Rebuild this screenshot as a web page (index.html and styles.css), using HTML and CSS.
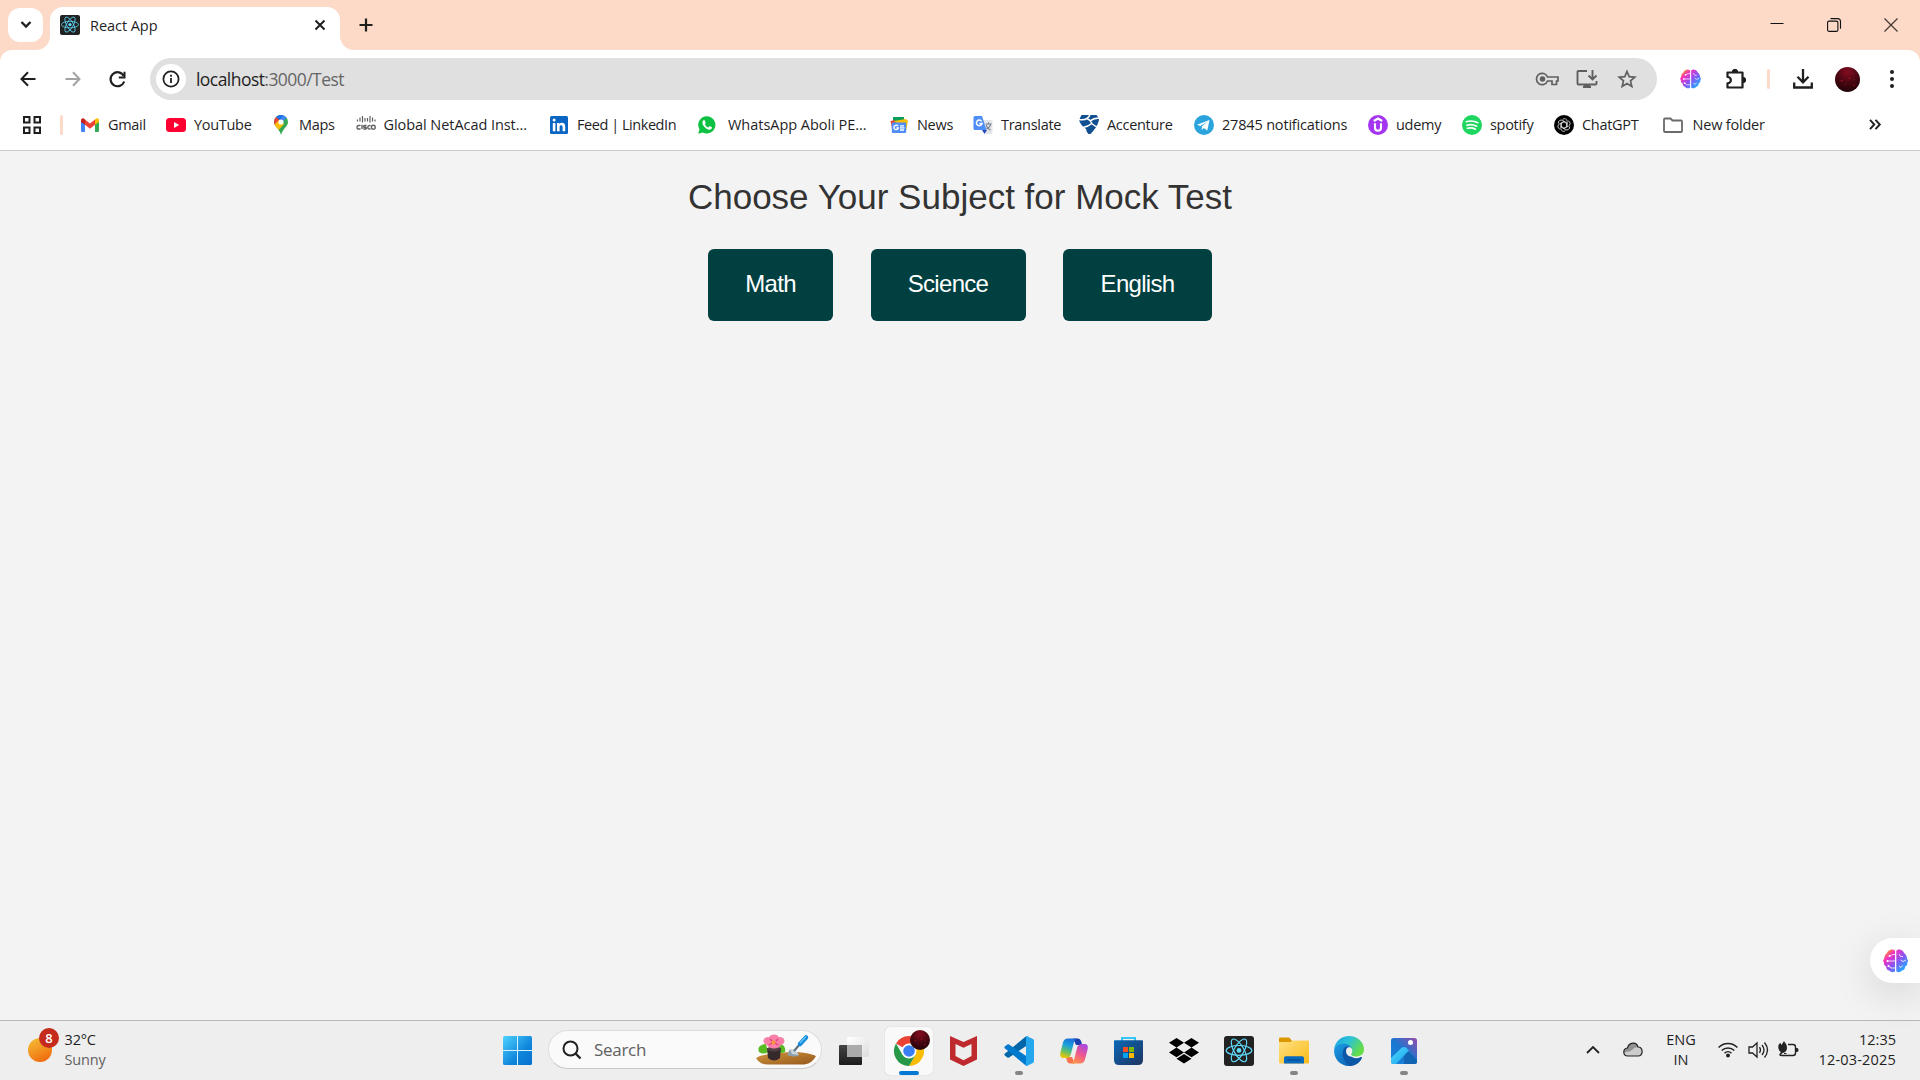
FILE: index.html
```html
<!DOCTYPE html>
<html lang="en">
<head>
<meta charset="utf-8">
<title>React App</title>
<link rel="stylesheet" href="styles.css">
</head>
<body>
<svg class="defs" aria-hidden="true">
  <defs>
    <linearGradient id="brainFill" x1="0" y1="0" x2="1" y2="1"><stop offset="0.05" stop-color="#ffb000"/><stop offset=".28" stop-color="#f52fc0"/><stop offset=".55" stop-color="#8a55f5"/><stop offset=".9" stop-color="#16b4ff"/></linearGradient>
    <radialGradient id="avatarFill" cx=".5" cy=".2" r=".8"><stop offset="0" stop-color="#850b20"/><stop offset=".5" stop-color="#4c0712"/><stop offset="1" stop-color="#210308"/></radialGradient>
    <linearGradient id="winFill" x1="0" y1="0" x2="1" y2="1"><stop offset="0" stop-color="#4fd3ff"/><stop offset=".6" stop-color="#0f86dc"/><stop offset="1" stop-color="#0670cf"/></linearGradient>
    <linearGradient id="sun" x1=".2" y1="0" x2=".7" y2="1"><stop offset="0" stop-color="#f4bd36"/><stop offset="1" stop-color="#f0680c"/></linearGradient>
    <linearGradient id="wood" x1="0" y1="0" x2="1" y2="1"><stop offset="0" stop-color="#d2953f"/><stop offset="1" stop-color="#94581a"/></linearGradient>
    <linearGradient id="copA" x1=".6" y1="0" x2=".3" y2="1"><stop offset="0" stop-color="#1b6fd8"/><stop offset=".35" stop-color="#18a0dc"/><stop offset=".65" stop-color="#5cbf70"/><stop offset="1" stop-color="#f0c800"/></linearGradient>
    <linearGradient id="copB" x1=".7" y1="0" x2=".2" y2="1"><stop offset="0" stop-color="#a948e0"/><stop offset=".5" stop-color="#f0588c"/><stop offset="1" stop-color="#ff9a45"/></linearGradient>
    <linearGradient id="store" x1="0" y1="0" x2="1" y2="1"><stop offset="0" stop-color="#0a68b8"/><stop offset="1" stop-color="#1e3560"/></linearGradient>
    <linearGradient id="folderFill" x1="0" y1="0" x2="1" y2="1"><stop offset="0" stop-color="#ffe083"/><stop offset="1" stop-color="#fbbb18"/></linearGradient>
    <linearGradient id="edgeTop" x1="0" y1="0" x2="1" y2=".5"><stop offset="0" stop-color="#1a9fe8"/><stop offset=".5" stop-color="#2cc3d3"/><stop offset="1" stop-color="#66dd45"/></linearGradient>
    <linearGradient id="edgeLow" x1="0" y1="0" x2="1" y2="1"><stop offset="0" stop-color="#1ba0e6"/><stop offset="1" stop-color="#0a50a8"/></linearGradient>
    <linearGradient id="photoBg" x1="0" y1="1" x2="1" y2="0"><stop offset="0" stop-color="#1687dc"/><stop offset=".5" stop-color="#1b76d0"/><stop offset="1" stop-color="#9a4cab"/></linearGradient>
    <linearGradient id="photoHill" x1="0" y1="0" x2="1" y2="1"><stop offset="0" stop-color="#54dcff"/><stop offset="1" stop-color="#149ee8"/></linearGradient>
    <linearGradient id="viewDark" x1="0" y1="0" x2="0" y2="1"><stop offset="0" stop-color="#444"/><stop offset="1" stop-color="#1c1c1c"/></linearGradient>
    <linearGradient id="viewLight" x1="0" y1="0" x2="1" y2="1"><stop offset="0" stop-color="#fff"/><stop offset="1" stop-color="#ddd"/></linearGradient>
    <symbol id="react" viewBox="0 0 30 30">
      <rect width="30" height="30" rx="3" fill="#222"/>
      <g fill="none" stroke="#61dafb" stroke-width="1.150"><ellipse cx="15" cy="14.400" rx="12.800" ry="4.900"/><ellipse cx="15" cy="14.400" rx="12.800" ry="4.900" transform="rotate(60 15 14.400)"/><ellipse cx="15" cy="14.400" rx="12.800" ry="4.900" transform="rotate(120 15 14.400)"/></g>
      <circle cx="15" cy="14.400" r="2.400" fill="#61dafb"/>
    </symbol>
    <symbol id="brain" viewBox="0 0 25 24">
      <path fill="url(#brainFill)" d="M12 1.800v20.400c-1.200 1.600-4.400 1.300-5.600-.7-2-.2-3.400-1.800-3.200-3.900C1.400 16.600.6 15 1 13.300-.2 12.300-.2 10.900 1.100 10 1.300 7.500 2 5.500 3.800 4.200 5.400.3 10-.6 12 1.800zM13.300 1.800v20.400c1.200 1.600 4.400 1.300 5.600-.7 2-.2 3.400-1.800 3.200-3.900 1.800-1 2.600-2.600 2.200-4.300 1-1 .9-2.400-.2-3.300-.2-2.500-1-4.500-2.800-5.800C19.700.3 15.300-.6 13.300 1.800z"/>
      <path fill="none" stroke="#fff" stroke-opacity=".8" stroke-width="1" d="M12 5.500H9.500L7 7M4 12h8M5.500 17l2.500 2h4M16 5l1.500 2.500H20M17.500 11l2.500 1.500L23 11M16 17l2 1.500 1.500-2"/>
      <circle cx="6.500" cy="7" r="1" fill="#fff"/><circle cx="4.500" cy="12" r="1" fill="#fff"/><circle cx="5.500" cy="17" r="1" fill="#fff"/>
    </symbol>
    <symbol id="avatar" viewBox="0 0 26 26">
      <circle cx="13" cy="13" r="13" fill="url(#avatarFill)"/>
      <g fill="#e01d3c" opacity=".75"><circle cx="7" cy="14" r=".8"/><circle cx="15" cy="12" r=".7"/><circle cx="20" cy="19" r=".8"/><circle cx="11" cy="18" r=".5"/><circle cx="18" cy="7" r=".5"/><circle cx="9" cy="8" r=".5"/><circle cx="20" cy="13" r=".5"/></g>
    </symbol>
  </defs>
</svg>

<div class="screen">
  <header class="tabstrip">
    <button class="tab-search" aria-label="Search tabs"><svg width="12" height="12" viewBox="0 0 12 12"><path d="M1.500 3 6 7.500 10.500 3" fill="none" stroke="#1f1f1f" stroke-width="2.300"/></svg></button>
    <div class="tab">
      <svg class="curve" width="14" height="14"><path d="M14 0v14H0A14 14 0 0 0 14 0z" fill="#fff"/></svg>
      <svg width="20" height="20"><use href="#react"/></svg>
      <span class="tab-title">React App</span>
      <svg width="12" height="12" viewBox="0 0 12 12"><path d="M1.500 1.500l9 9M10.500 1.500l-9 9" stroke="#1f1f1f" stroke-width="2"/></svg>
      <svg class="curve curve-right" width="14" height="14"><path d="M0 0v14h14A14 14 0 0 1 0 0z" fill="#fff"/></svg>
    </div>
    <svg class="new-tab" width="14" height="14" viewBox="0 0 14 14"><path d="M7 .5v13M.5 7h13" stroke="#1f1f1f" stroke-width="2.200"/></svg>
    <div class="window-controls">
      <svg width="14" height="14"><path d="M.5 5.500h13" stroke="#111"/></svg>
      <svg width="14" height="14" viewBox="0 0 14 14" fill="none" stroke="#111" stroke-width="1.100"><rect x=".6" y="3.100" width="10.300" height="10.300" rx="1.500"/><path d="M3.500.6h7a3 3 0 0 1 3 3v7.200"/></svg>
      <svg width="14" height="14"><path d="M.5.5l13 13M13.500.5l-13 13" stroke="#40352f" stroke-width="1.200"/></svg>
    </div>
  </header>

  <div class="toolbar">
    <nav class="history">
      <svg width="16" height="16" viewBox="0 0 16 16" fill="none" stroke="#1f1f1f" stroke-width="2"><path d="M15.500 8H2M8 1.200 1.500 8 8 14.800"/></svg>
      <svg width="16" height="16" viewBox="0 0 16 16" fill="none" stroke="#a3a3a3" stroke-width="2"><path d="M.5 8H14M8 1.200 14.500 8 8 14.800"/></svg>
      <svg width="17" height="17" viewBox="0 0 17 17"><path d="M14.800 5A7 7 0 1 0 15.200 10.500" fill="none" stroke="#1f1f1f" stroke-width="2.200"/><path d="M16.500.8v6.700H9.800V5.600h4.700V.8z" fill="#1f1f1f"/></svg>
    </nav>
    <div class="omnibox">
      <span class="site-info"><svg width="18" height="18" viewBox="0 0 18 18"><circle cx="9" cy="9" r="7.600" fill="none" stroke="#1f1f1f" stroke-width="1.700"/><path d="M9 8v5M9 4.800v1.900" stroke="#1f1f1f" stroke-width="1.800"/></svg></span>
      <span class="url">localhost<span class="path">:3000/Test</span></span>
      <svg class="key" width="23" height="14" viewBox="0 0 23 14" fill="none" stroke="#5f5f5f" stroke-width="1.700"><path d="M11.500 5A5.700 5.700 0 1 0 11.500 9H16v3.500h4.500V9H22V5z"/><circle cx="6.500" cy="7" r="1.900" fill="#5f5f5f"/></svg>
      <svg width="22" height="20" viewBox="0 0 22 20" fill="none" stroke="#5f5f5f" stroke-width="1.900"><path d="M11 2H2.500Q1.500 2 1.500 3v11.500q0 1 1 1h17q1 0 1-1V12M16.500 1v9M12.500 6.500l4 4 4-4M7 18h8"/><path d="M8 16h6v3H8z" fill="#5f5f5f" stroke="none"/></svg>
      <svg width="20" height="20" viewBox="0 0 20 20"><path d="M10 2.500l2.200 5.200 5.600.5-4.300 3.700 1.300 5.500-4.800-2.900-4.800 2.900 1.300-5.500L2.200 8.200l5.600-.5z" fill="none" stroke="#5f5f5f" stroke-width="1.700"/></svg>
    </div>
    <svg class="ext-brain" width="21" height="20"><use href="#brain"/></svg>
    <svg class="ext-puzzle" width="22" height="22" viewBox="0 0 22 22"><path d="M2.500 4.500h15v15h-15v-4.200c4.500 0 4.500-6.300 0-6.300z" fill="none" stroke="#1f1f1f" stroke-width="2.200" stroke-linejoin="round"/><path d="M7.300 4a2.700 2.700 0 0 1 5.400 0zM18 9.300a2.700 2.700 0 0 1 0 5.400z" fill="#1f1f1f" stroke="#1f1f1f"/></svg>
    <i class="divider"></i>
    <svg class="download" width="20" height="20" viewBox="0 0 20 20" fill="none" stroke="#1f1f1f" stroke-width="2.300"><path d="M10 0v13M4.500 7.800l5.500 5.500 5.500-5.500M1.200 13.500v5h17.600v-5"/></svg>
    <svg class="profile" width="25" height="25"><use href="#avatar"/></svg>
    <svg width="6" height="20" viewBox="0 0 6 20" fill="#1f1f1f"><circle cx="3" cy="3" r="2"/><circle cx="3" cy="10" r="2"/><circle cx="3" cy="17" r="2"/></svg>
  </div>

  <div class="bookmarks">
    <svg class="apps" width="18" height="18" viewBox="0 0 18 18" fill="none" stroke="#1f1f1f" stroke-width="2"><path d="M1 1h5.500v5.500H1zM11.500 1H17v5.500h-5.500zM1 11.500h5.500V17H1zM11.500 11.500H17V17h-5.500z"/></svg>
    <i class="divider"></i>
    <div class="links">
      <a><svg width="20" height="20" viewBox="0 0 20 20"><path fill="#4285f4" d="M1 6v10q0 1 1 1h3V8z"/><path fill="#34a853" d="M15 8v9h3q1 0 1-1V6z"/><path fill="#ea4335" d="M5 4.500l5 4 5-4v5.300l-5 4-5-4z"/><path fill="#c5221f" d="M1 5.500C1 3 3.500 2.500 5 4.500v5.300L1 7z"/><path fill="#fbbc04" d="M15 4.500c1.500-2 4-1.500 4 1V7l-4 2.800z"/></svg><span>Gmail</span></a>
      <a><svg width="20" height="20" viewBox="0 0 20 20"><rect y="3" width="20" height="14" rx="3.500" fill="#ff0033"/><path d="M8 7l5.200 3L8 13z" fill="#fff"/></svg><span>YouTube</span></a>
      <a><svg width="20" height="20" viewBox="0 0 20 20"><clipPath id="pin"><path d="M10 0a7 7 0 0 1 7 7c0 4.500-5 6-7 13-2-7-7-8.500-7-13a7 7 0 0 1 7-7z"/></clipPath><g clip-path="url(#pin)"><path fill="#34a853" d="M0 0h20v20H0z"/><path fill="#4285f4" d="M6 0h12L8 11z"/><path fill="#1a73e8" d="M3 0h9L8 7z"/><path fill="#ea4335" d="M0 2h5l4 3.500-6 6.500z"/><path fill="#fbbc04" d="M2 11l6-6 5 4-7 8z"/></g><circle cx="10" cy="7" r="2.600" fill="#fff"/></svg><span>Maps</span></a>
      <a class="netacad"><svg width="20" height="20" viewBox="0 0 20 20" stroke="#606060" fill="none"><path stroke-width="1.200" d="M1.500 4.500v2M4 2.500v4M6.500 1v6.500M9 3v3.500M11.500 3v3.500M14 1v6.500M16.500 2.500v4M19 4.500v2"/><path stroke-width="1.400" d="M4.500 10.500H2.800Q1 10.500 1 12.300t1.800 1.700h1.700M6 9.800V14M10.500 10.500H8.600q-1 0-1 .9t1 .9h.8q1 0 1 .9t-1 .8H7.300M14.500 10.500h-1q-1.700 0-1.700 1.800t1.700 1.700h1"/><circle cx="17.300" cy="12.200" r="1.900" stroke-width="1.400"/></svg><span>Global NetAcad Inst...</span></a>
      <a class="linkedin"><svg width="20" height="20" viewBox="0 0 20 20"><rect x="1" y="1" width="18" height="18" rx="1.500" fill="#0a66c2"/><path fill="#fff" d="M3.800 8h2.600v8.300H3.800zM8 8h2.500v1.200c1.200-2.100 5.700-2 5.700 2.200v4.900h-2.600V12c0-2.500-3-2.200-3 0v4.300H8z"/><circle cx="5.100" cy="5.100" r="1.500" fill="#fff"/></svg><span>Feed | LinkedIn</span></a>
      <a class="whatsapp"><svg width="20" height="20" viewBox="0 0 20 20"><path fill="#0fc143" d="M10 1.300a8.600 8.600 0 1 1-4.200 16.200L1.200 18.800l1.300-4.500A8.600 8.600 0 0 1 10 1.300z"/><path fill="#fff" d="M7.600 5.300c-.8-.7-2.200.7-2.200 2.200 0 3.200 4.500 7.500 7.300 7.200 1.700-.2 2.400-1.500 2.200-2.400l-2.300-1.200-1.200 1.400c-1.900-.7-2.900-1.800-3.600-3.300l1-1.300z"/></svg><span>WhatsApp Aboli PE...</span></a>
      <a><svg width="20" height="20" viewBox="0 0 20 20"><path fill="#0c9d58" d="M4 2h11v8H4z"/><path fill="#ea4335" d="M1.500 6l4-1 2 10-4 1z"/><path fill="#fbbc04" d="M5 6l12-2 2 2-2 10z"/><rect x="2.800" y="7.500" width="14.400" height="10.500" rx="1" fill="#4f8df7"/><path stroke="#fff" stroke-width="1.300" fill="none" d="M9 11.200a2.200 2.200 0 1 0 .3 1.800H7.500M11 10.800h4M11 12.900h4.500M11 15h4"/></svg><span>News</span></a>
      <a><svg width="20" height="20" viewBox="0 0 20 20"><path fill="#e3e5e8" d="M8 5h10q1.500 0 1.500 1.500v11q0 1.500-1.500 1.500h-5z"/><path fill="#2449bd" d="M9 15h5l-2.500 4z"/><path fill="#4f8df7" d="M2 1h7l4.500 14H2q-1.500 0-1.500-1.500v-11Q.5 1 2 1z"/><path stroke="#fff" stroke-width="1.500" fill="none" d="M8.600 6.300A2.800 2.800 0 1 0 9 8.500H6.400"/><path stroke="#6e7b88" stroke-width="1.100" fill="none" d="M12.500 9h6M15.500 7.500V9M17.500 9c0 2-2 4-4 5M13.500 10c0 2 2 4 4 5"/></svg><span>Translate</span></a>
      <a><svg width="20" height="20" viewBox="0 0 20 20"><path fill="#124f91" d="M2.500 0h15Q20 2.500 20 5C19 10 15.500 15 11.500 19H9.500Q7.500 17.500 7 14 1 9.500 0 5z"/><path fill="none" stroke="#fff" stroke-width="1.500" d="M-.5 4.500C5 5.500 9.500 4 11-.5M8.500 3.800C11 5 12.500 7 12.700 9M20.500 3C16 3 13 4.500 11 6M4 12.500C7 12 10.500 10.500 12.700 8.500 14.500 10 15.500 11 18 12"/></svg><span>Accenture</span></a>
      <a class="telegram"><svg width="20" height="20" viewBox="0 0 20 20"><circle cx="10" cy="10" r="10" fill="#2ba3dc"/><path fill="#fff" d="M3 9.700L15.500 5l-2.200 10.500-3.500-2.400-2 2v-3.500l5.500-4.800-7 4.300z"/></svg><span>27845 notifications</span></a>
      <a><svg width="20" height="20" viewBox="0 0 20 20"><circle cx="10" cy="10" r="10" fill="#a435f0"/><path fill="none" stroke="#fff" stroke-width="2.100" d="M5.800 6L10 3.500 14.200 6M7 8.200v4.500c0 4 6 4 6 0V8.200"/></svg><span>udemy</span></a>
      <a><svg width="20" height="20" viewBox="0 0 20 20"><circle cx="10" cy="10" r="10" fill="#1ed760"/><path fill="none" stroke="#fff" stroke-width="1.700" stroke-linecap="round" d="M4.300 6.700c4-1.200 8-.8 11.500 1M4.900 10.200c3.500-1 6.800-.6 9.700 1M5.400 13.300c2.800-.7 5.600-.4 8 .9"/></svg><span>spotify</span></a>
      <a><svg width="20" height="20" viewBox="0 0 20 20"><circle cx="10" cy="10" r="10" fill="#000"/><g fill="none" stroke="#fff" stroke-width=".7"><path id="petal" d="M8.500 4.400a2.800 2.800 0 0 1 4.700 2.200v4.700L9.800 13.200"/><use href="#petal" transform="rotate(60 10 10)"/><use href="#petal" transform="rotate(120 10 10)"/><use href="#petal" transform="rotate(180 10 10)"/><use href="#petal" transform="rotate(240 10 10)"/><use href="#petal" transform="rotate(300 10 10)"/></g></svg><span>ChatGPT</span></a>
      <a class="folder"><svg width="20" height="20" viewBox="0 0 20 20"><path d="M1 16V4.500q0-1 1-1h5.500l2 2H18q1 0 1 1V16q0 1-1 1H2q-1 0-1-1z" fill="none" stroke="#6a6a6a" stroke-width="1.800"/></svg><span>New folder</span></a>
    </div>
    <svg class="more" width="12" height="11" viewBox="0 0 12 11" fill="none" stroke="#1f1f1f" stroke-width="1.900"><path d="M1 .8l4.300 4.700L1 10.200M6.500.8l4.300 4.700-4.300 4.700"/></svg>
  </div>

  <main class="page">
    <h1>Choose Your Subject for Mock Test</h1>
    <div class="subjects">
      <button class="math">Math</button><button class="science">Science</button><button class="english">English</button>
    </div>
    <aside class="assistant"><svg width="25" height="24"><use href="#brain"/></svg></aside>
  </main>

  <footer class="taskbar">
    <div class="weather">
      <span class="sun"><svg width="24" height="24"><circle cx="12" cy="12" r="12" fill="url(#sun)"/></svg><b class="badge">8</b></span>
      <span class="forecast"><span class="temp">32°C</span><span class="muted">Sunny</span></span>
    </div>
    <svg class="start" width="29" height="29" viewBox="0 0 29 29"><rect width="29" height="29" rx="1.500" fill="url(#winFill)"/><path d="M14.500 0v29M0 14.500h29" stroke="#d9f1ff" stroke-width="1"/></svg>
    <div class="search">
      <svg width="20" height="20" viewBox="0 0 20 20" fill="none" stroke="#222"><circle cx="8.500" cy="8.500" r="7" stroke-width="2"/><path d="M13.500 13.500l5 5" stroke-width="2.400"/></svg>
      <span>Search</span>
      <svg width="60" height="31" viewBox="0 0 60 31">
        <path d="M0 24c8-5 16-3 26-5 9-2 25-1 34 3-3 6-8 8.500-14 8.500H12C6 30.500 2 28 0 24z" fill="url(#wood)"/>
        <path d="M3 18c-2-5 2-8 7-8l2 8c-3 2-6 2-9 0zM23 10c5 0 7 4 6 8-4 2-7 1-9-2z" fill="#58bb22"/>
        <path d="M11 14h14l-1 10q-6 5-12 0z" fill="#35292b"/><ellipse cx="18" cy="15" rx="7" ry="2.500" fill="#514044"/>
        <g fill="#f77fa8"><ellipse cx="18" cy="4" rx="5" ry="3.500"/><ellipse cx="12" cy="7" rx="4.500" ry="4"/><ellipse cx="24" cy="7" rx="4.500" ry="4"/><ellipse cx="18" cy="10.500" rx="7" ry="4"/></g><path d="M14 5l2 2M22 5l-2 2M13 11l3-2M22 11l-3-2" stroke="#e23c7b" stroke-width="1.200" fill="none"/><circle cx="17.500" cy="8.500" r="2" fill="#f49a35"/>
        <path d="M34 15l9 6q-3 3-12 0z" fill="#8ea0ad"/><path d="M34 15q5-1 9 6l-7-1z" fill="#cad6df"/><path d="M38 17l6-7" stroke="#5c6b78" stroke-width="2"/><path d="M44 10l6-6.500" stroke="#168bdc" stroke-width="4.500" stroke-linecap="round"/><path d="M44.500 8.500l5-5.500" stroke="#62c6fa" stroke-width="1.500" stroke-linecap="round"/>
      </svg>
    </div>
    <div class="apps-row">
      <span class="app"><svg width="30" height="30" viewBox="0 0 30 30"><rect y="9" width="23" height="20" rx="1" fill="url(#viewDark)"/><rect x="8" y="1" width="22" height="20" rx="1" fill="url(#viewLight)"/><path d="M8 9h15v12H9q-1 0-1-1z" fill="#aaa"/></svg></span>
      <span class="app active running"><svg width="30" height="30" viewBox="0 0 30 30"><path fill="#ea4335" d="M15 15L2 7.500A15 15 0 0 1 28 7.500H15z"/><path fill="#fbbc04" d="M15 7.500h13A15 15 0 0 1 15 30l6.500-11.300z"/><path fill="#279847" d="M2 7.500A15 15 0 0 0 15 30l6.500-11.300L15 21 8.500 18.700z"/><circle cx="15" cy="15" r="7.500" fill="#fff"/><circle cx="15" cy="15" r="5.800" fill="#397ff3"/></svg><svg class="app-badge" width="20" height="20"><use href="#avatar"/></svg></span>
      <span class="app"><svg width="28" height="30" viewBox="0 0 28 30"><path fill="#bf2a2e" fill-rule="evenodd" d="M0 0l13.500 6L27 0v23.500L13.500 30 0 23.500zM5.500 8v12l8 4.300 8-4.300V8l-8 3.800z"/></svg></span>
      <span class="app running"><svg width="30" height="30" viewBox="0 0 30 30"><path fill="#0065a9" d="M.8 19.500q-1-1 .2-2L21.500.8q1-.8 2.200-.2V9L5 21.500q-.8.600-1.600 0z"/><path fill="#007acc" d="M.8 10.500q-1 1 .2 2l20.500 16.700q1 .8 2.200.2V21L5 8.500q-.8-.6-1.600 0z"/><path fill="#25a7ee" d="M22 29.700V.3q.4-.4 1.200 0l5.700 2.800q1.100.5 1.100 1.800v20.200q0 1.300-1.100 1.800l-5.700 2.800q-.8.400-1.200 0z"/></svg></span>
      <span class="app"><svg width="28" height="26" viewBox="0 0 28 26"><path fill="#1a3fb0" d="M13 .5h5Q20.200.5 21 3l1.300 4H16z"/><path fill="#f9734f" d="M15 25.500h-5Q7.800 25.500 7 23l-1.300-4H12z"/><path fill="url(#copA)" d="M8 .5h8.500Q14.800 1 14 4l-3.200 12.500Q9.800 20 6.500 20H3.500Q-.6 20 .3 15L3 4.500Q4 .5 8 .5z"/><path fill="url(#copB)" d="M20 25.500h-8.500Q13.200 25 14 22l3.200-12.500Q18.200 6 21.500 6h3Q28.600 6 27.700 11L25 21.500Q24 25.500 20 25.500z"/></svg></span>
      <span class="app"><svg width="30" height="30" viewBox="0 0 30 30"><path d="M8 6V2h13v4" stroke="#33c5f5" stroke-width="2" fill="none"/><path d="M0 5q0-.8.800-.8h27.400q.8 0 .8.800v19q0 5-5 5H5q-5 0-5-5z" fill="url(#store)"/><path fill="#f25022" d="M9 11h5v5H9z"/><path fill="#7fba00" d="M15 11h5v5h-5z"/><path fill="#00a4ef" d="M9 17h5v5H9z"/><path fill="#ffb900" d="M15 17h5v5h-5z"/></svg></span>
      <span class="app"><svg width="30" height="26" viewBox="0 0 30 26"><path d="M7.500 0L15 4.800 7.500 9.600 0 4.800zM22.500 0L30 4.800l-7.500 4.800L15 4.800zM7.500 9.600l7.500 4.800-7.500 4.800L0 14.400zM22.500 9.600l7.500 4.800-7.500 4.800-7.500-4.800zM15 16l7.500 4.800L15 25.600l-7.500-4.800z"/></svg></span>
      <span class="app"><svg width="30" height="30"><use href="#react"/></svg></span>
      <span class="app running"><svg width="30" height="28" viewBox="0 0 30 28"><path fill="#dc9700" d="M0 1.500Q0 .5 1 .5h8.500q.8 0 1.300.6L13 4v5H0z"/><path fill="url(#folderFill)" d="M0 5h11.500l2-1.500H29q1 0 1 1v21q0 1-1 1H1q-1 0-1-1z"/><path fill="#0869bd" d="M5 26.500V21q0-1.800 1.800-1.800h16.400q1.800 0 1.800 1.800v5.500z"/><path stroke="#064587" d="M8.500 23h13"/></svg></span>
      <span class="app"><svg width="30" height="30" viewBox="0 0 30 30"><path fill="url(#edgeLow)" d="M.2 13C2 8 8 6 13 7c4 1 6 4 6 7l-4-3c-5 4-2 14 6 14 2 0 4-.5 6.500-2C25 27.500 20 30 15 30 6 30-1 22 .2 13z"/><path fill="#0c58a6" d="M11 11c-4 5-3 14 5 18.900 5 0 9-2.900 12-7.900q.2-1.500-1.200-1c-4 2-8 1.500-10.300-1.500C14 16 15 13 15 11q-2-1-4 0z"/><path fill="url(#edgeTop)" d="M.2 12.500C1.500 5 7.500 0 15 0c8.500 0 15 6 15 13.500 0 5-4 7-8 7-3 0-5-1-5-2.300 0-.8 1.200-1.200 1.200-3.500 0-4-4-7.200-9-7.200-4 0-7 2-9 5z"/><path fill="#eee" d="M15 11.300c2 0 3.400 1.500 3.200 4-.1 1.500-1.200 2.100-1.200 2.900 0 .8 1 1.600 3 2-4.500 1.300-8-1.500-8-5 0-2.500 1.500-3.900 3-3.900z"/></svg></span>
      <span class="app running"><svg width="26" height="26" viewBox="0 0 26 26"><rect width="26" height="26" rx="2.500" fill="url(#photoBg)"/><path fill="#1265b2" d="M13 9l13 13v1.500q0 2.500-2.500 2.500H13z"/><path fill="url(#photoHill)" d="M0 20L10.500 10q2.500-2 5 0l2.500 2.500L5 26H2.500Q0 26 0 23.500z"/><circle cx="19.500" cy="4.500" r="2.500" fill="#fff"/></svg></span>
    </div>
    <div class="tray">
      <svg class="up" width="14" height="9" viewBox="0 0 14 9"><path d="M1 8l6-6 6 6" fill="none" stroke="#222" stroke-width="1.800"/></svg>
      <svg class="cloud" width="20" height="15" viewBox="0 0 20 15"><path d="M5 14C-.5 14-.5 6.500 4.500 6 6 0 13.500-.5 15 5c5-.5 6 9 0 9z" fill="#ccc"/><path d="M4.500 6C6 0 13.500-.5 15 5c-4 0-5 3-9 4.500Q3 9 1.500 11 0 6.500 4.500 6z" fill="#919191"/><path d="M5 14C-.5 14-.5 6.500 4.500 6 6 0 13.500-.5 15 5c5-.5 6 9 0 9z" fill="none" stroke="#222" stroke-width="1.200"/></svg>
      <span class="lang"><span>ENG</span><span>IN</span></span>
      <svg class="wifi" width="20" height="16" viewBox="0 0 20 16" fill="none" stroke="#222" stroke-width="1.500"><path d="M.6 5.500a13 13 0 0 1 18.800 0M3.700 8.500a9 9 0 0 1 12.600 0M6.500 11.200a5 5 0 0 1 7 0"/><circle cx="10" cy="13.500" r="1.200" fill="#222"/></svg>
      <svg class="sound" width="21" height="18" viewBox="0 0 21 18" fill="none" stroke="#222" stroke-width="1.300"><path d="M1 6h3.500L9 2v14l-4.500-4H1z"/><path d="M11.500 6.200q2 2.800 0 5.600M14 4q4 5 0 10M16.500 1.500q6 7.500 0 15"/></svg>
      <svg class="battery" width="21" height="18" viewBox="0 0 21 18"><path d="M10 3.500h5q2.500 0 2.500 2.500v6q0 2.500-2.500 2.500H4q-1.500 0-2.500-1" fill="none" stroke="#222" stroke-width="1.400"/><path d="M18 7h1q1.500 0 1.500 2T19 11h-1zM6 0c1 2 3 3 3 7 0 3-2 4.500-4.500 5L2 14.500 1.500 13 3 11C-.5 9-.5 3 2.500 2l1 2z" fill="#222"/><path d="M8.500 12.500H6" stroke="#222"/></svg>
      <span class="clock"><span class="time">12:35</span><span class="date">12-03-2025</span></span>
    </div>
  </footer>
</div>
</body>
</html>
```
FILE: styles.css
```css
* { box-sizing: border-box; }
body { margin: 0; font-family: "Open Sans", "Noto Sans", sans-serif; color: #1f1f1f; }
svg { display: block; flex: none; overflow: visible; }
button { border: 0; padding: 0; font: inherit; }
.defs { position: absolute; width: 0; height: 0; }
.screen { width: 1920px; height: 1080px; display: flex; flex-direction: column; overflow: hidden; background: #fcdac7; }

.tabstrip { height: 50px; display: flex; padding-left: 8px; flex: none; }
.tab-search { width: 35px; height: 34px; margin-top: 8px; border-radius: 12px; background: #fff; display: flex; align-items: center; justify-content: center; }
.tab { position: relative; width: 290px; height: 43px; margin: 7px 0 0 7px; padding: 0 14px 7px 10px; border-radius: 13px 13px 0 0; background: #fff; display: flex; align-items: center; }
.curve { position: absolute; left: -14px; bottom: 0; }
.curve-right { left: auto; right: -14px; }
.tab-title { flex: 1; margin-left: 10px; font-size: 14.500px; letter-spacing: -.05px; }
.new-tab { margin: 18px 0 0 19px; }
.window-controls { margin-left: auto; padding: 18px 22px 0 0; display: flex; gap: 43px; }

.toolbar { height: 50px; flex: none; display: flex; align-items: center; padding: 8px 24px 0 20px; border-radius: 12px 12px 0 0; background: #fff; }
.history { width: 130px; flex: none; display: flex; gap: 28.500px; align-items: center; }
.omnibox { width: 1507px; flex: none; height: 42px; border-radius: 21px; background: #e0e0e0; padding: 0 20px 0 6px; display: flex; align-items: center; gap: 19px; }
.site-info { width: 30px; height: 30px; border-radius: 50%; background: #fff; display: flex; align-items: center; justify-content: center; }
.url { flex: 1; margin-left: -9px; font-size: 17.500px; letter-spacing: -.55px; }
.path { color: #666; }
.key { margin-right: -2px; }
.ext-brain { margin-left: 23px; }
.ext-puzzle { margin-left: 24px; }
.divider { width: 3px; height: 20px; border-radius: 2px; background: #fcdac7; flex: none; }
.toolbar .divider { margin-left: 20px; }
.download { margin-left: 22.500px; }
.profile { margin: 0 29px 0 22.500px; }

.bookmarks { height: 51px; flex: none; display: flex; align-items: center; padding: 0 39px 1px 23px; background: #fff; border-bottom: 1px solid #c9c9c9; }
.bookmarks .divider { margin-left: 19px; }
.links { margin-left: 17px; flex: 1; display: grid; grid-template-columns: 86px 105px 84.500px 193.500px 151px 189px 84px 106px 115px 174px 94px 92px 92.500px 1fr; }
.links a { display: flex; align-items: center; gap: 8px; white-space: nowrap; font-size: 14.500px; line-height: 20px; letter-spacing: -.3px; }
.links .netacad { letter-spacing: -.06px; }
.links .linkedin { letter-spacing: -.45px; }
.links .whatsapp { letter-spacing: -.03px; }
.links .telegram { letter-spacing: -.18px; }
.whatsapp svg { margin: 0 3px 0 -3px; }
.folder svg { margin: 0 2px 0 -2px; }
.links .folder { margin-left: 18px; letter-spacing: -.2px; }

.page { position: relative; height: 869px; flex: none; background: #f3f3f3; font-family: "Liberation Sans", Arial, sans-serif; display: flex; flex-direction: column; align-items: center; }
h1 { margin: 24px 0 0; font-size: 35px; font-weight: 400; line-height: 43px; color: #333; white-space: nowrap; }
.subjects { margin-top: 31px; display: flex; gap: 37.500px; }
.subjects button { height: 72px; padding: 0 0 2px; border-radius: 6px; background: #004040; color: #fff; font-size: 24px; letter-spacing: -.7px; }
.math { width: 125px; }
.science { width: 155px; }
.english { width: 149px; }
.assistant { position: absolute; right: 0; top: 787px; width: 50px; height: 45px; padding-left: 13px; border-radius: 23px 0 0 23px; background: #fff; display: flex; align-items: center; box-shadow: 0 10px 40px rgba(0,0,0,.13); }

.taskbar { height: 60px; flex: none; display: flex; align-items: center; padding-left: 28px; border-top: 1px solid #b9b9b9; background: #eee; font-size: 14.500px; line-height: 20px; }
.weather { width: 475px; display: flex; align-items: center; padding-bottom: 2px; }
.sun { position: relative; margin-right: 12.500px; }
.badge { position: absolute; left: 11px; top: -10px; width: 20px; height: 20px; border-radius: 50%; background: #c42b1c; color: #fff; text-align: center; font-size: 13px; font-weight: 600; }
.forecast, .clock, .lang { display: flex; flex-direction: column; }
.forecast { letter-spacing: -.15px; }
.muted { color: #626262; }
.search { width: 274px; height: 39px; margin: -2px 0 0 16px; border: 1px solid #ddd; border-bottom-color: #c8c8c8; border-radius: 20px; background: #fafafa; padding: 0 5px 0 13px; display: flex; align-items: center; font-size: 17px; color: #606060; }
.search span { flex: 1; margin-left: 12px; letter-spacing: -.3px; }
.apps-row { display: flex; gap: 7px; margin-left: 8px; }
.app { position: relative; width: 48px; height: 48px; display: flex; align-items: center; justify-content: center; border-radius: 5px; }
.active { background: #f9f9f9; box-shadow: 0 0 1px #bbb; }
.app-badge { position: absolute; right: 3px; top: 3px; }
.running::after { content: ""; position: absolute; bottom: 0; width: 8px; height: 4px; border-radius: 2px; background: #858585; }
.active::after { width: 20px; background: #0078d4; }
.tray { margin-left: auto; padding: 0 24px 2px 0; display: flex; align-items: center; }
.cloud { margin-left: 23px; }
.lang { width: 30px; align-items: center; margin-left: 23px; }
.wifi { margin-left: 22px; }
.sound { margin-left: 10px; }
.battery { margin-left: 9px; }
.clock { width: 97px; align-items: flex-end; }
.date { letter-spacing: .18px; }
```
